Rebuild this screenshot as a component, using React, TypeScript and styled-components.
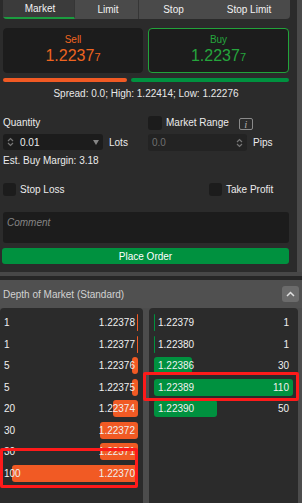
import React from 'react'
import styled, { createGlobalStyle, css } from 'styled-components'

const GlobalStyle = createGlobalStyle`
  html, body {
    margin: 0;
    padding: 0;
    background: #262626;
  }
  * {
    box-sizing: border-box;
  }
`

const ORANGE = '#f15a24'
const GREEN = '#00913f'

const Root = styled.div`
  width: 302px;
  height: 503px;
  display: flex;
  flex-direction: column;
  overflow: hidden;
  background: #262626;
  font-family: 'Liberation Sans', Arial, sans-serif;
  font-size: 10px;
  color: #ececec;
`

const TopPanel = styled.div`
  height: 272px;
  display: flex;
  background: #2b2b2b;
`

const TopContent = styled.div`
  flex: 1;
  padding: 0 8px 0 3px;
  display: flex;
  flex-direction: column;
`

const ScrollTrack = styled.div<{ $w: number }>`
  width: ${({ $w }) => $w}px;
  flex-shrink: 0;
  background: #4a4a4a;
`

const TabBar = styled.div`
  display: flex;
  height: 19px;
  margin-right: -1px;
  background: #4a4a4a;
  border-radius: 0 0 4px 4px;
  overflow: hidden;
`

const Tab = styled.div<{ $w?: number; $active?: boolean; $divider?: boolean }>`
  ${({ $w }) => ($w ? `width: ${$w}px;` : 'flex: 1;')}
  display: flex;
  align-items: center;
  justify-content: center;
  padding-left: 3px;
  height: 100%;
  color: #f2f2f2;
  ${({ $divider }) => $divider && 'border-right: 1px solid #363636;'}
  ${({ $active }) =>
    $active &&
    css`
      background: #3b3b3b;
      border-bottom: 2px solid #1b9c3f;
    `}
`

const PriceRow = styled.div`
  display: grid;
  grid-template-columns: 140px 1fr;
  column-gap: 5px;
  margin-top: 9px;
`

const PriceBox = styled.div<{ $side: 'sell' | 'buy' }>`
  height: 45px;
  border-radius: 4px;
  background: #1c1c1c;
  display: flex;
  flex-direction: column;
  align-items: center;
  padding-top: 6px;
  color: ${({ $side }) => ($side === 'sell' ? '#ee6420' : '#25a53c')};
  border: 1px solid ${({ $side }) => ($side === 'sell' ? '#1c1c1c' : '#22a33a')};
`

const SideLabel = styled.div`
  line-height: 12px;
  font-size: 10px;
  margin-top: -1px;
`

const BigPrice = styled.div`
  line-height: 20px;
  font-size: 16px;
  small {
    font-size: 11px;
  }
`

const BarRow = styled.div`
  display: grid;
  grid-template-columns: 124px 1fr;
  column-gap: 4px;
  margin-top: 5px;
`

const SideBar = styled.div<{ $color: string }>`
  height: 4px;
  border-radius: 2px;
  background: ${({ $color }) => $color};
`

const SpreadLine = styled.div`
  margin-top: 6px;
  line-height: 12px;
  text-align: center;
  color: #e8e8e8;
`

const FormGrid = styled.div`
  display: grid;
  grid-template-columns: 140px 1fr;
  column-gap: 5px;
  margin-top: 15px;
`

const FieldLabel = styled.div`
  align-self: end;
  line-height: 12px;
  margin-bottom: 1px;
`

const CheckRow = styled.div`
  display: flex;
  align-items: center;
  height: 15px;
  gap: 4px;
`

const CheckBox = styled.span<{ $size?: number }>`
  width: ${({ $size }) => $size ?? 14}px;
  height: ${({ $size }) => $size ?? 14}px;
  border-radius: 3px;
  background: #1c1c1c;
  flex-shrink: 0;
`

const InfoIcon = styled.span`
  width: 14px;
  height: 12px;
  margin-left: 6px;
  margin-top: 3px;
  border: 1px solid #8a8a8a;
  border-radius: 2px;
  display: flex;
  align-items: center;
  justify-content: center;
  font-family: 'Liberation Serif', serif;
  font-style: italic;
  font-size: 11px;
  color: #a8a8a8;
`

const InputRow = styled.div<{ $top: number }>`
  display: flex;
  align-items: center;
  margin-top: ${({ $top }) => $top}px;
  gap: 4px;
`

const NumberInput = styled.div<{ $w: number; $h: number; $muted?: boolean }>`
  width: ${({ $w }) => $w}px;
  height: ${({ $h }) => $h}px;
  border-radius: 3px;
  background: ${({ $muted }) => ($muted ? '#232323' : '#1c1c1c')};
  display: flex;
  align-items: center;
  padding: 0 4px;
  gap: 6px;
  color: ${({ $muted }) => ($muted ? '#6f6f6f' : '#ececec')};
`

const InputValue = styled.span`
  flex: 1;
`

const Unit = styled.span`
  margin-left: 2px;
`

const MarginLine = styled.div`
  margin-top: 4px;
  line-height: 12px;
`

const ToggleGrid = styled.div`
  display: grid;
  grid-template-columns: 206px 1fr;
  margin-top: 15px;
`

const CommentBox = styled.div`
  margin-top: 15px;
  height: 31px;
  border-radius: 3px;
  background: #1c1c1c;
  padding: 5px 4px;
  line-height: 12px;
  font-style: italic;
  color: #858585;
`

const PlaceButton = styled.div`
  margin: 5px 0 0 -1px;
  height: 16px;
  border-radius: 3px;
  background: ${GREEN};
  color: #ffffff;
  display: flex;
  align-items: center;
  justify-content: center;
`

const SplitLine = styled.div`
  height: 4px;
  background: #474747;
`

const DarkGap = styled.div`
  height: 4px;
  background: #262626;
`

const DomHeader = styled.div`
  height: 28px;
  background: #505050;
  display: flex;
  align-items: center;
  justify-content: space-between;
  padding: 0 3px 0 3px;
  color: #d2d2d2;
`

const CollapseButton = styled.div`
  width: 17px;
  height: 16px;
  border-radius: 3px;
  background: #6b6b6b;
  display: flex;
  align-items: center;
  justify-content: center;
`

const DomBody = styled.div`
  position: relative;
  flex: 1;
  display: flex;
  gap: 6px;
  padding-right: 4px;
  background: #4c4c4c;
`

const BookList = styled.div<{ $w?: number }>`
  ${({ $w }) => ($w ? `width: ${$w}px;` : 'flex: 1;')}
  background: #2b2b2b;
  border-radius: 4px 4px 0 0;
  padding-top: 4px;
`

const BookRow = styled.div<{ $side: 'bid' | 'ask' }>`
  position: relative;
  height: 21.5px;
  display: flex;
  align-items: center;
  justify-content: space-between;
  padding: ${({ $side }) => ($side === 'bid' ? '0 8px 0 4px' : '0 9px 0 9px')};
  color: #f0f0f0;
  span {
    position: relative;
  }
`

const VolumeBar = styled.div<{ $side: 'bid' | 'ask' }>`
  position: absolute;
  top: 2.25px;
  height: 17px;
  border-radius: 3px;
  ${({ $side }) =>
    $side === 'bid'
      ? css`
          right: 5px;
          background: ${ORANGE};
        `
      : css`
          left: 5px;
          background: ${GREEN};
        `}
`

// red annotation frames drawn over the order book
const Highlight = styled.div<{ $left: number; $top: number; $w: number; $h: number }>`
  position: absolute;
  left: ${({ $left }) => $left}px;
  top: ${({ $top }) => $top}px;
  width: ${({ $w }) => $w}px;
  height: ${({ $h }) => $h}px;
  border: 3px solid #ff1a1a;
  border-radius: 2px;
  pointer-events: none;
`

const Spinner = () => (
  <svg width="7" height="10" viewBox="0 0 7 10">
    <path d="M1 4 L3.5 1.5 L6 4 M1 6 L3.5 8.5 L6 6" stroke="#777" strokeWidth="1.2" fill="none" />
  </svg>
)

const Caret = () => (
  <svg width="6" height="5" viewBox="0 0 6 5">
    <path d="M0 0 H6 L3 5 Z" fill="#858585" />
  </svg>
)

const bids = [
  { qty: 1, price: '1.22378' },
  { qty: 1, price: '1.22377' },
  { qty: 5, price: '1.22376' },
  { qty: 5, price: '1.22375' },
  { qty: 20, price: '1.22374' },
  { qty: 30, price: '1.22372' },
  { qty: 30, price: '1.22371' },
  { qty: 100, price: '1.22370' },
]

const asks = [
  { qty: 1, price: '1.22379' },
  { qty: 1, price: '1.22380' },
  { qty: 30, price: '1.22386' },
  { qty: 110, price: '1.22389' },
  { qty: 50, price: '1.22390' },
]

const barWidth = (qty: number) => `${qty * 1.26}px`

const App: React.FC = () => {
  return (
    <Root>
      <GlobalStyle />
      <TopPanel>
        <TopContent>
          <TabBar>
            <Tab $w={72} $active $divider>Market</Tab>
            <Tab $w={64} $divider>Limit</Tab>
            <Tab $w={66}>Stop</Tab>
            <Tab>Stop Limit</Tab>
          </TabBar>

          <PriceRow>
            <PriceBox $side="sell">
              <SideLabel>Sell</SideLabel>
              <BigPrice>
                1.2237<small>7</small>
              </BigPrice>
            </PriceBox>
            <PriceBox $side="buy">
              <SideLabel>Buy</SideLabel>
              <BigPrice>
                1.2237<small>7</small>
              </BigPrice>
            </PriceBox>
          </PriceRow>

          <BarRow>
            <SideBar $color={ORANGE} />
            <SideBar $color={GREEN} />
          </BarRow>

          <SpreadLine>Spread: 0.0; High: 1.22414; Low: 1.22276</SpreadLine>

          <FormGrid>
            <FieldLabel>Quantity</FieldLabel>
            <CheckRow>
              <CheckBox />
              <span>Market Range</span>
              <InfoIcon>i</InfoIcon>
            </CheckRow>
            <InputRow $top={3}>
              <NumberInput $w={100} $h={16}>
                <Spinner />
                <InputValue>0.01</InputValue>
                <Caret />
              </NumberInput>
              <Unit>Lots</Unit>
            </InputRow>
            <InputRow $top={4}>
              <NumberInput $w={99} $h={17} $muted>
                <InputValue>0.0</InputValue>
                <Spinner />
              </NumberInput>
              <Unit>Pips</Unit>
            </InputRow>
          </FormGrid>

          <MarginLine>Est. Buy Margin: 3.18</MarginLine>

          <ToggleGrid>
            <CheckRow>
              <CheckBox $size={13} />
              <span>Stop Loss</span>
            </CheckRow>
            <CheckRow>
              <CheckBox $size={13} />
              <span>Take Profit</span>
            </CheckRow>
          </ToggleGrid>

          <CommentBox>Comment</CommentBox>
          <PlaceButton>Place Order</PlaceButton>
        </TopContent>
        <ScrollTrack $w={5} />
      </TopPanel>

      <SplitLine />
      <DarkGap />

      <DomHeader>
        <span>Depth of Market (Standard)</span>
        <CollapseButton>
          <svg width="9" height="6" viewBox="0 0 9 6">
            <path d="M1 5 L4.5 1.5 L8 5" stroke="#e0e0e0" strokeWidth="1.5" fill="none" />
          </svg>
        </CollapseButton>
      </DomHeader>

      <DomBody>
        <BookList $w={143}>
          {bids.map((b) => (
            <BookRow $side="bid" key={b.price}>
              <VolumeBar $side="bid" style={{ width: barWidth(b.qty) }} />
              <span>{b.qty}</span>
              <span>{b.price}</span>
            </BookRow>
          ))}
        </BookList>
        <BookList>
          {asks.map((a) => (
            <BookRow $side="ask" key={a.price}>
              <VolumeBar $side="ask" style={{ width: barWidth(a.qty) }} />
              <span>{a.price}</span>
              <span>{a.qty}</span>
            </BookRow>
          ))}
        </BookList>

        <Highlight $left={0} $top={140} $w={138} $h={40} />
        <Highlight $left={143} $top={64} $w={156} $h={29} />
      </DomBody>
    </Root>
  )
}

export default App
